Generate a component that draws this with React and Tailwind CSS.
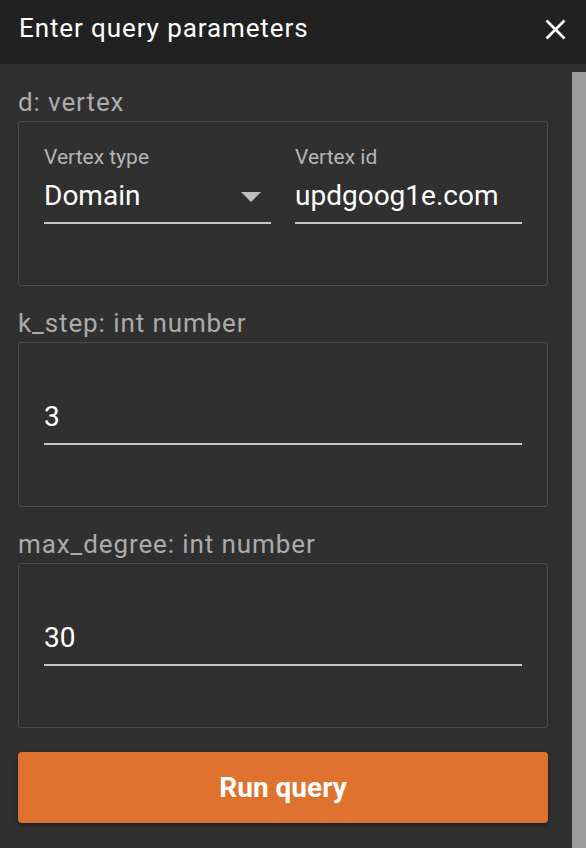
import React from 'react';

function Field({ label, value, select }) {
    return (
        <div className="flex flex-col">
            <div className="h-[24px] text-[21px] leading-[24px] text-[#b5b5b5]">{label}</div>
            <div className="mt-[9px] h-[46px] border-b-2 border-[#c6c6c6] pb-[8px] flex items-start justify-between">
                <span className="text-[28px] leading-[36px] text-white">{value}</span>
                {select && (
                    <svg width="20" height="10" viewBox="0 0 20 10" className="mr-[10px] mt-[14px]">
                        <polygon points="0,0 20,0 10,10" fill="#bdbdbd" />
                    </svg>
                )}
            </div>
        </div>
    );
}

function Section({ title, children, className }) {
    return (
        <div className={className}>
            <div className="h-[32px] text-[26px] leading-[32px] tracking-[0.9px] text-[#ababab]">{title}</div>
            <div className="mt-[3px] h-[165px] rounded-[3px] border border-[#4b4b4b] px-[25px] pt-[23px]">
                {children}
            </div>
        </div>
    );
}

export default function App() {
    return (
        <div className="w-[586px] h-[848px] overflow-hidden bg-[#303030] font-['Roboto',sans-serif]">
            <div className="h-[64px] bg-[#212121] flex items-start justify-between pl-[19px] pr-[20px]">
                <h2 className="mt-[12px] text-[26px] leading-[32px] tracking-[0.9px] text-white">Enter query parameters</h2>
                <svg width="21" height="21" viewBox="0 0 21 21" className="mt-[19px]">
                    <line x1="1.5" y1="1.5" x2="19.5" y2="19.5" stroke="white" strokeWidth="2.6" />
                    <line x1="19.5" y1="1.5" x2="1.5" y2="19.5" stroke="white" strokeWidth="2.6" />
                </svg>
            </div>
            <div className="flex">
                <div className="w-[530px] ml-[18px] pt-[22px]">
                    <Section title="d: vertex">
                        <div className="grid grid-cols-2 gap-[24px]">
                            <Field label="Vertex type" value="Domain" select />
                            <Field label="Vertex id" value="updgoog1e.com" />
                        </div>
                    </Section>
                    <Section title="k_step: int number" className="mt-[21px]">
                        <Field label="" value="3" />
                    </Section>
                    <Section title="max_degree: int number" className="mt-[21px]">
                        <Field label="" value="30" />
                    </Section>
                    <button
                        type="button"
                        className="mt-[24px] w-full h-[71px] rounded-[4px] bg-[#e07230] text-white text-[28px] font-bold shadow-[0_2px_4px_rgba(0,0,0,0.4)]"
                    >
                        Run query
                    </button>
                </div>
                <div className="ml-[24px] mt-[8px] w-[14px] h-[800px] bg-[#9c9c9c]" />
            </div>
        </div>
    );
}
